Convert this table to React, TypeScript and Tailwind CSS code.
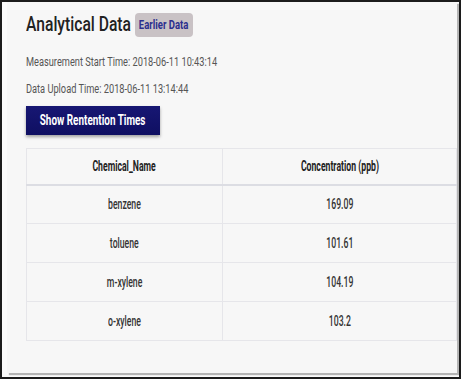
import React from "react";

const rows = [
  ["benzene", "169.09"],
  ["toluene", "101.61"],
  ["m-xylene", "104.19"],
  ["o-xylene", "103.2"],
];

export default function App() {
  return (
    <div
      className="w-[463px] h-[380px] bg-white"
      style={{ fontFamily: 'Roboto, "Liberation Sans", sans-serif' }}
    >
      <div className="w-[461px] h-[379px] border-2 border-[#1c1c1c] bg-[#fbfbfb] pl-[5px] pr-[2px] pb-[4px] flex flex-col">
        <div className="flex-1 flex flex-col bg-[#f7f7f7] pl-[19px] pt-[11px] shadow-[2px_2px_1px_rgba(0,0,0,0.28)]">
          <div className="flex items-center h-[24px]">
            <div className="w-[109px] whitespace-nowrap">
              <span className="inline-block origin-left scale-x-[0.745] text-[21px] leading-[24px] font-medium text-[#222]">Analytical Data</span>
            </div>
            <div className="w-[58px] h-[24px] rounded-[4px] bg-[#c9c2c5] flex items-center justify-center whitespace-nowrap">
              <span className="inline-block scale-x-[0.76] text-[12.5px] font-bold text-[#2b2f8e]">Earlier Data</span>
            </div>
          </div>
          <div className="mt-[16px] h-[16px] leading-[16px] whitespace-nowrap">
            <span className="inline-block origin-left scale-x-[0.77] text-[12px] text-[#555]">Measurement Start Time: 2018-06-11 10:43:14</span>
          </div>
          <div className="mt-[11px] h-[16px] leading-[16px] whitespace-nowrap">
            <span className="inline-block origin-left scale-x-[0.77] text-[12px] text-[#555]">Data Upload Time: 2018-06-11 13:14:44</span>
          </div>
          <div className="mt-[10px]">
            <button className="w-[134px] h-[29px] bg-gradient-to-b from-[#171773] to-[#0f0f62] flex items-center justify-center whitespace-nowrap shadow-[0_2px_3px_rgba(0,0,0,0.35)]">
              <span className="inline-block scale-x-[0.64] text-[15.5px] font-bold text-white">Show Rentention Times</span>
            </button>
          </div>
          <table className="mt-[13px] w-[431px] border-collapse text-[#222]">
            <thead>
              <tr className="h-[36px] border-b-2 border-[#dcdde3]">
                <th className="w-[196px] border border-[#e6e6ea] text-center whitespace-nowrap">
                  <span className="inline-block scale-x-[0.62] text-[14px] font-bold">Chemical_Name</span>
                </th>
                <th className="border border-[#e6e6ea] text-center whitespace-nowrap">
                  <span className="inline-block scale-x-[0.62] text-[14px] font-bold">Concentration (ppb)</span>
                </th>
              </tr>
            </thead>
            <tbody>
              {rows.map(([a, b]) => (
                <tr key={a} className="h-[39px]">
                  <td className="border border-[#e6e6ea] text-center whitespace-nowrap">
                    <span className="inline-block scale-x-[0.62] text-[14px] font-medium text-[#333]">{a}</span>
                  </td>
                  <td className="border border-[#e6e6ea] text-center whitespace-nowrap">
                    <span className="inline-block scale-x-[0.62] text-[14px] font-medium text-[#333]">{b}</span>
                  </td>
                </tr>
              ))}
            </tbody>
          </table>
        </div>
      </div>
    </div>
  );
}
